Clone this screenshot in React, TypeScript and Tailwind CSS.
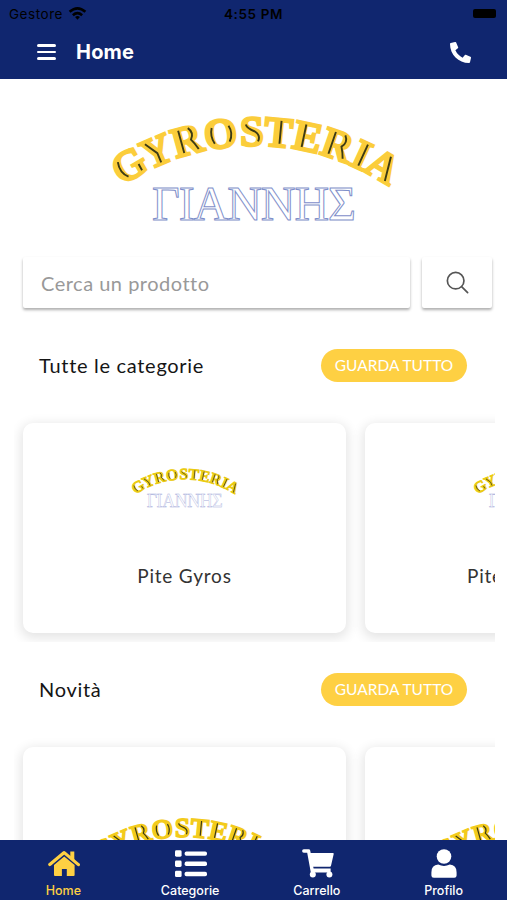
import React from 'react';
import { FaPhoneAlt } from 'react-icons/fa';
import { IoSearchOutline } from 'react-icons/io5';

// angle of every letter on the arc, its advance in em and its engraved strokes
const LETTERS = [
  { char: 'G', angle: -29.8, em: 0.778, shade: 'M-8 -22 Q-12 -12 -6 -4 M9 -10 V-3' },
  { char: 'Y', angle: -22.8, em: 0.722, shade: 'M-8 -25 L0 -12 V-2' },
  { char: 'R', angle: -15.5, em: 0.722, shade: 'M-6 -26 V-3 M4 -26 Q9 -20 4 -14 Q7 -9 9 -3' },
  { char: 'O', angle: -7.8, em: 0.778, shade: 'M-8 -21 Q-11 -13 -7 -5 M9 -21 Q13 -13 8 -5' },
  { char: 'S', angle: -0.7, em: 0.556, shade: 'M-6 -21 Q-5 -17 3 -14 Q9 -10 6 -4' },
  { char: 'T', angle: 5.3, em: 0.667, shade: 'M2 -26 V-3' },
  { char: 'E', angle: 12, em: 0.667, shade: 'M-4 -26 V-3' },
  { char: 'R', angle: 19, em: 0.722, shade: 'M-6 -26 V-3 M4 -26 Q9 -20 4 -14 Q7 -9 9 -3' },
  { char: 'I', angle: 24.8, em: 0.389, shade: 'M1.5 -26 V-3' },
  { char: 'A', angle: 30.3, em: 0.722, shade: 'M2 -26 L9 -2' },
];

const ARC = { cx: 255, cy: 385.5, r: 240, size: 42.5 };

const placed = LETTERS.map((letter) => {
  const rad = (letter.angle * Math.PI) / 180;
  const x = ARC.cx + ARC.r * Math.sin(rad);
  const y = ARC.cy - ARC.r * Math.cos(rad);
  const half = (letter.em * ARC.size) / 2;
  return {
    ...letter,
    x,
    y,
    startX: x - half * Math.cos(rad),
    startY: y - half * Math.sin(rad),
  };
});

interface LogoProps {
  className: string;
  gold?: string;
  outline?: string;
}

const Logo = ({ className, gold = '#fbcd3b', outline = '#7f8fca' }: LogoProps) => (
  <svg viewBox="110 110 290 115" className={className}>
    <text
      x={placed.map((l) => l.startX.toFixed(1)).join(' ')}
      y={placed.map((l) => l.startY.toFixed(1)).join(' ')}
      rotate={placed.map((l) => l.angle).join(' ')}
      fill={gold}
      stroke={gold}
      strokeWidth="2.5"
      className="font-['Liberation_Serif',serif] text-[42.5px] font-bold"
    >
      GYROSTERIA
    </text>
    {placed.map((l) => (
      <path
        key={l.angle}
        d={l.shade}
        transform={`translate(${l.x} ${l.y}) rotate(${l.angle})`}
        fill="none"
        stroke="#3c3a14"
        strokeWidth="1.9"
      />
    ))}
    <text
      x="152"
      y="220"
      fill="#fff"
      stroke={outline}
      strokeWidth="1"
      textLength="204"
      className="font-['Liberation_Serif',serif] text-[48px]"
    >
      ΓΙΑΝΝΗΣ
    </text>
  </svg>
);

const WifiIcon = () => (
  <svg viewBox="0 0 20 14" className="-mt-0.5 h-[13px] w-[19px]" fill="none" stroke="#000" strokeWidth="2.8">
    <path d="M1.5 5.2 Q10 -2.2 18.5 5.2" />
    <path d="M5 8.8 Q10 4.4 15 8.8" />
    <path d="M7.4 10.8 Q10 8.8 12.6 10.8 L10 13.6 Z" fill="#000" stroke="none" />
  </svg>
);

const HomeIcon = () => (
  <svg viewBox="0 0 32 28" className="ml-0.5 h-7 w-8" fill="currentColor">
    <path d="M22.3 1.4 H26.3 V11 L22.3 7.5 Z" />
    <path d="M1.8 14.6 L16.2 2.6 L30.4 14.6" fill="none" stroke="currentColor" strokeWidth="3.2" strokeLinejoin="round" strokeLinecap="round" />
    <path d="M6 15 L16.2 6.6 L26.6 15 V25 Q26.6 26 25.6 26 H18.8 V19 H13.9 V26 H7 Q6 26 6 25 Z" />
  </svg>
);

const ListIcon = () => (
  <svg viewBox="0 0 32 28" className="ml-0.5 h-7 w-8" fill="currentColor">
    {[0, 10.2, 20.4].map((y) => (
      <g key={y}>
        <rect x="0" y={y + 0.3} width="6.6" height="6.4" rx="1.4" />
        <rect x="9.6" y={y + 1.4} width="22.4" height="4.4" rx="1.8" />
      </g>
    ))}
  </svg>
);

const CartIcon = () => (
  <svg viewBox="0 0 32 29" className="ml-0.5 h-[29px] w-8" fill="currentColor">
    <path d="M1.8 2 H6.6 L10.4 22.6" fill="none" stroke="currentColor" strokeWidth="3.4" strokeLinecap="round" strokeLinejoin="round" />
    <path d="M7 4 H31 Q31.9 4 31.7 5 L29 16.8 Q28.8 17.8 27.8 17.8 H9.6 Z" />
    <path d="M10.4 19.6 H28.6 V23.4 H9.6 Z" />
    <circle cx="10.8" cy="25.6" r="3" />
    <circle cx="27.4" cy="25.6" r="3" />
  </svg>
);

const ProfileIcon = () => (
  <svg viewBox="0 0 26 29" className="h-[29px] w-[26px]" fill="currentColor">
    <circle cx="13" cy="7.5" r="7.3" />
    <path d="M7.2 15.6 Q13 18.4 18.8 15.6 Q25.6 16 25.6 23.4 V26.4 Q25.6 28.8 23.2 28.8 H2.8 Q0.4 28.8 0.4 26.4 V23.4 Q0.4 16 7.2 15.6 Z" />
  </svg>
);

const SectionHeader = ({ title }: { title: string }) => (
  <div className="flex h-[34px] items-center justify-between pl-[39px] pr-10">
    <h2 className="text-[20px] tracking-[0.7px] text-[#151515]">{title}</h2>
    <button className="h-[33px] w-[146px] rounded-full bg-[#fed043] pt-0.5 text-[15.5px] text-white">
      GUARDA TUTTO
    </button>
  </div>
);

const Carousel = ({ children }: { children: React.ReactNode }) => (
  <div className="ml-[14px] mr-3 flex h-[228px] gap-[19px] overflow-hidden pl-[9px] pt-[9px]">
    {children}
  </div>
);

const Card = ({ children }: { children: React.ReactNode }) => (
  <div className="flex h-[210px] w-[323px] shrink-0 flex-col items-center rounded-[10px] bg-white shadow-[0_3px_12px_2px_rgba(0,0,0,0.11)]">
    {children}
  </div>
);

const tabs = [
  { label: 'Home', icon: <HomeIcon />, active: true },
  { label: 'Categorie', icon: <ListIcon /> },
  { label: 'Carrello', icon: <CartIcon /> },
  { label: 'Profilo', icon: <ProfileIcon /> },
];

export default function App() {
  return (
    <div className="flex h-[900px] w-[507px] flex-col overflow-hidden bg-white font-[Lato,sans-serif]">
      <header className="h-[79px] shrink-0 bg-[#10266f] font-[Inter,sans-serif]">
        <div className="grid h-7 grid-cols-3 items-center pl-[9px] pr-[11px] text-[13px] text-black">
          <div className="flex items-center gap-[5px]">
            <span className="text-[13.5px] tracking-[0.55px]">Gestore</span>
            <WifiIcon />
          </div>
          <span className="pl-0.5 text-center text-[13.5px] font-semibold tracking-[0.6px]">4:55 PM</span>
          <span className="mb-[2px] h-[9px] w-[23px] justify-self-end rounded-[2px] bg-black" />
        </div>
        <div className="flex h-12 items-center pl-[37px] pr-9 text-white">
          <div className="flex w-[19px] flex-col gap-[4px]">
            <span className="h-[2.5px] rounded-full bg-white" />
            <span className="h-[2.5px] rounded-full bg-white" />
            <span className="h-[2.5px] rounded-full bg-white" />
          </div>
          <h1 className="ml-5 text-[20px] font-bold tracking-[0.2px]">Home</h1>
          <FaPhoneAlt className="ml-auto size-[21px]" />
        </div>
      </header>

      <main className="min-h-0 flex-1 overflow-hidden">
        <Logo className="ml-[110px] mt-[31px] h-[115px] w-[290px]" />

        <div className="mt-8 flex gap-3 pl-[23px] pr-[15px]">
          <div className="flex h-[51px] w-[387px] items-center rounded-[2px] bg-white pl-[18px] text-[20px] tracking-[0.5px] text-[#999] shadow-[0_2px_3px_rgba(0,0,0,0.32)]">
            Cerca un prodotto
          </div>
          <button className="flex h-[51px] w-[70px] items-center justify-center rounded-[2px] bg-white text-[#555] shadow-[0_2px_3px_rgba(0,0,0,0.32)]">
            <IoSearchOutline className="size-[27px]" />
          </button>
        </div>

        <div className="mt-10">
          <SectionHeader title="Tutte le categorie" />
        </div>
        <div className="mt-8">
          <Carousel>
            <Card>
              <Logo className="mt-[43px] h-[43px] w-[108px]" gold="#ebcb12" outline="#a6addb" />
              <p className="mt-[53px] text-[19px] tracking-[0.8px] text-[#333]">Pite Gyros</p>
            </Card>
            <Card>
              <Logo className="mt-[43px] h-[43px] w-[108px]" gold="#ebcb12" outline="#a6addb" />
              <p className="mt-[53px] w-[119px] text-[19px] tracking-[0.8px] text-[#333]">Pite</p>
            </Card>
          </Carousel>
        </div>

        <div className="mt-[30px]">
          <SectionHeader title="Novità" />
        </div>
        <div className="mt-8">
          <Carousel>
            <Card>
              <Logo className="mt-[67px] h-[74px] w-[187px]" gold="#f3cb1c" />
            </Card>
            <Card>
              <Logo className="mt-[67px] h-[74px] w-[187px]" gold="#f3cb1c" />
            </Card>
          </Carousel>
        </div>
      </main>

      <nav className="grid h-[60px] shrink-0 grid-cols-4 bg-[#10266f] font-[Inter,sans-serif]">
        {tabs.map((tab) => (
          <a
            key={tab.label}
            className={`flex flex-col items-center pt-[9px] ${tab.active ? 'text-[#fed043]' : 'text-white'}`}
          >
            <span className="flex h-[29px] items-center">{tab.icon}</span>
            <span className="mt-[5px] text-[12.5px] font-medium leading-4">{tab.label}</span>
          </a>
        ))}
      </nav>
    </div>
  );
}
